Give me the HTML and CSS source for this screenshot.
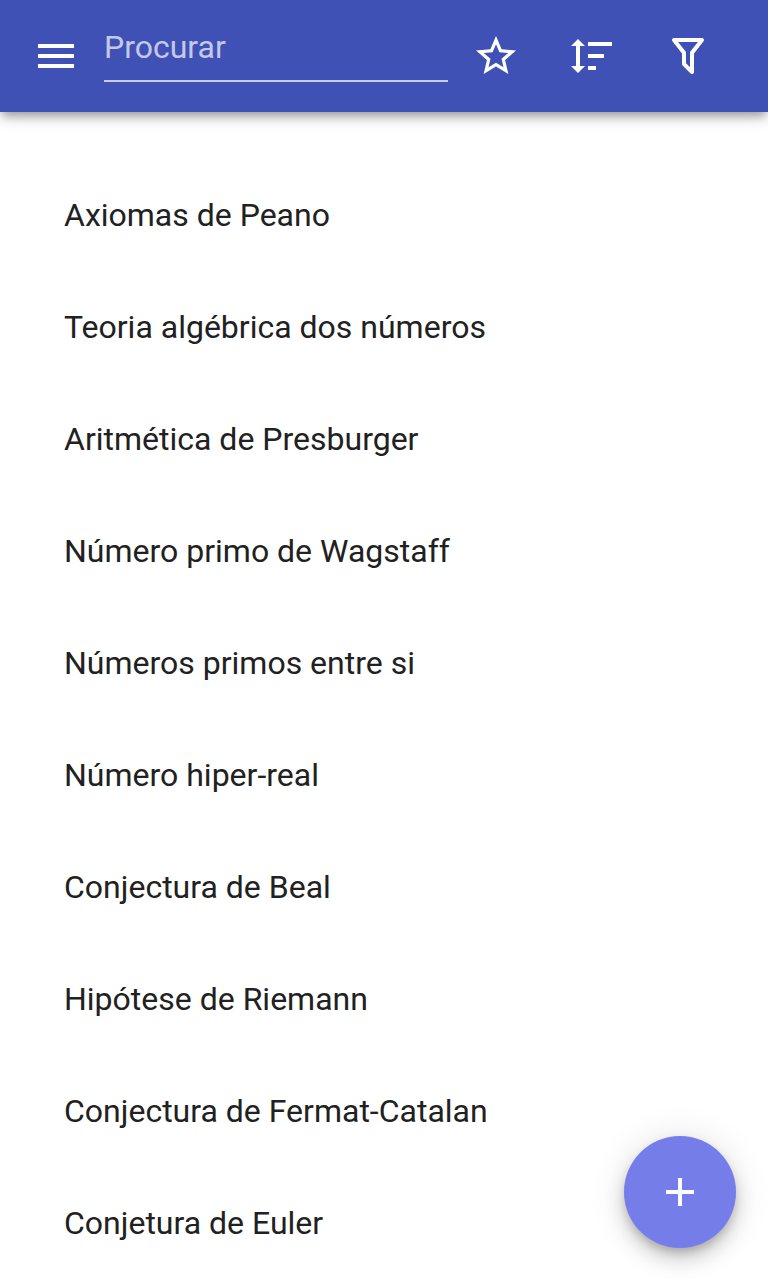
FILE: index.html
```html
<!DOCTYPE html>
<html lang="pt">
<head>
<meta charset="utf-8">
<title>Teoremas</title>
<link rel="stylesheet" href="styles.css">
</head>
<body>
<header class="toolbar">
  <button class="menu" aria-label="Menu"><svg class="icon" viewBox="0 0 24 24"><path d="M3 18h18v-2H3v2zm0-5h18v-2H3v2zm0-7v2h18V6H3z"/></svg></button>
  <div class="search">Procurar</div>
  <nav class="actions">
    <svg class="icon" viewBox="0 0 24 24"><path d="M12 15.39l-3.76 2.27.99-4.28-3.32-2.88 4.38-.37L12 6.09l1.71 4.04 4.38.37-3.32 2.88.99 4.28M22 9.24l-7.19-.61L12 2 9.19 8.63 2 9.24l5.45 4.73L5.82 21 12 17.27 18.18 21l-1.64-7.03L22 9.24z"/></svg>
    <svg class="icon" viewBox="0 0 24 24"><path d="M10 13v-2h8v2h-8m0 6v-2h4v2h-4m0-12V5h12v2H10M6 17h2.500L5 20.500 1.500 17H4V7H1.500L5 3.500 8.500 7H6v10z"/></svg>
    <svg class="icon" viewBox="0 0 24 24"><path d="M15 19.880c.04.300-.060.620-.290.830-.390.390-1.020.390-1.410 0L9.290 16.700c-.230-.230-.330-.530-.290-.830V10.750L4.210 4.620c-.340-.430-.260-1.060.170-1.400C4.570 3.080 4.780 3 5 3h14c.220 0 .430.080.620.220.430.340.510.970.170 1.400L15 10.750v9.130M7.040 5L11 10.060v5.520l2 2v-7.530L16.960 5H7.040z"/></svg>
  </nav>
</header>
<ul class="list">
  <li>Axiomas de Peano</li>
  <li>Teoria algébrica dos números</li>
  <li>Aritmética de Presburger</li>
  <li>Número primo de Wagstaff</li>
  <li>Números primos entre si</li>
  <li>Número hiper-real</li>
  <li>Conjectura de Beal</li>
  <li>Hipótese de Riemann</li>
  <li>Conjectura de Fermat-Catalan</li>
  <li>Conjetura de Euler</li>
</ul>
<button class="fab" aria-label="Adicionar"><svg class="icon" viewBox="0 0 24 24"><path d="M19 13h-6v6h-2v-6H5v-2h6V5h2v6h6v2z"/></svg></button>
</body>
</html>
```
FILE: styles.css
```css
* { box-sizing: border-box; }
body {
  margin: 0;
  height: 1280px;
  overflow: hidden;
  background: #fff;
  color: #212121;
  font: 32px/48px Roboto, sans-serif;
}
button { border: 0; padding: 0; background: none; }
.icon { display: block; flex: none; width: 48px; height: 48px; fill: #fff; }
.toolbar {
  position: relative;
  display: flex;
  align-items: center;
  height: 112px;
  padding: 0 56px 0 32px;
  background: #3f51b5;
  box-shadow: 0 4px 8px -2px rgba(0, 0, 0, .2), 0 8px 10px -2px rgba(0, 0, 0, .18), 0 2px 20px rgba(0, 0, 0, .12);
}
.menu { width: 48px; }
.search {
  align-self: flex-start;
  width: 344px;
  height: 82px;
  margin: 0 24px;
  padding-top: 23px;
  border-bottom: 2px solid rgba(255, 255, 255, .7);
  color: rgba(255, 255, 255, .7);
}
.actions { display: flex; gap: 48px; }
.list { list-style: none; margin: 0; padding: 48px 0 0; }
.list li {
  display: flex;
  align-items: center;
  height: 112px;
  padding: 0 64px 2px;
}
.fab {
  position: absolute;
  right: 32px;
  bottom: 32px;
  display: grid;
  place-items: center;
  width: 112px;
  height: 112px;
  border-radius: 50%;
  background: #757de8;
  box-shadow: 0 6px 10px -2px rgba(0, 0, 0, .2), 0 12px 20px rgba(0, 0, 0, .14), 0 2px 36px rgba(0, 0, 0, .12);
}
```
